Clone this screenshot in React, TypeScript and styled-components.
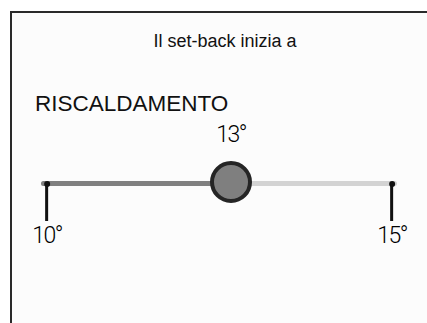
import styled, { createGlobalStyle } from "styled-components";

const GlobalStyle = createGlobalStyle`
	html, body {
		margin: 0;
		padding: 0;
		background: #ffffff;
		overflow: hidden;
	}
	body {
		font-family: "Liberation Sans", Arial, sans-serif;
		color: #111111;
	}
`;

const Frame = styled.div`
	margin: 11px 0 0 10px;
	width: 426px;
	height: 330px;
	border: 2px solid #2a2a2a;
	background: #fcfcfc;
`;

const Title = styled.div`
	padding-top: 18px;
	font-size: 18px;
	line-height: 20px;
	text-align: center;
`;

const Heading = styled.div`
	margin-top: 40px;
	padding-left: 23px;
	font-size: 22.5px;
	line-height: 26px;
`;

const Slider = styled.div`
	position: relative;
	margin-left: 29px;
	width: 356px;
	height: 140px;
	font-family: Roboto, "Open Sans", sans-serif;
	font-weight: 300;
	font-size: 23px;
	line-height: 22px;
	letter-spacing: -1.5px;
	color: #000000;
`;

const Track = styled.div`
	position: absolute;
	left: 0;
	right: 0;
	top: 64px;
	height: 5px;
	border-radius: 3px;
	background: #d3d3d3;
	overflow: hidden;
`;

const Fill = styled.div`
	height: 100%;
	background: #808080;
`;

const Knob = styled.div`
	position: absolute;
	top: 44px;
	width: 42px;
	height: 42px;
	box-sizing: border-box;
	border: 4px solid #252525;
	border-radius: 50%;
	background: #7f7f7f;
	transform: translateX(-50%);
`;

const ValueLabel = styled.div`
	position: absolute;
	top: 7px;
	transform: translateX(-50%);
`;

const Tick = styled.div`
	position: absolute;
	top: 64px;
	display: flex;
	flex-direction: column;
	align-items: center;
	transform: translateX(-50%);
`;

const Dot = styled.div`
	width: 6px;
	height: 6px;
	border-radius: 50%;
	background: #111111;
`;

const Stem = styled.div`
	margin-top: -2px;
	width: 3px;
	height: 36px;
	background: #111111;
`;

const TickLabel = styled.div`
	margin-top: 4px;
`;

const TRACK_WIDTH = 356;
const MIN_X = 6;
const MAX_X = 351;

function App() {
	// knob sits a bit left of the linear spot, as in the device screen
	const knobX = Math.round(MIN_X + (MAX_X - MIN_X) * 0.532);

	return (
		<>
			<GlobalStyle />
			<Frame>
				<Title>Il set-back inizia a</Title>
				<Heading>RISCALDAMENTO</Heading>
				<Slider>
					<ValueLabel style={{ left: knobX }}>13°</ValueLabel>
					<Track>
						<Fill style={{ width: (knobX / TRACK_WIDTH) * 100 + "%" }} />
					</Track>
					<Tick style={{ left: MIN_X }}>
						<Dot />
						<Stem />
						<TickLabel>10°</TickLabel>
					</Tick>
					<Tick style={{ left: MAX_X }}>
						<Dot />
						<Stem />
						<TickLabel>15°</TickLabel>
					</Tick>
					<Knob style={{ left: knobX }} />
				</Slider>
			</Frame>
		</>
	);
}

export default App;
